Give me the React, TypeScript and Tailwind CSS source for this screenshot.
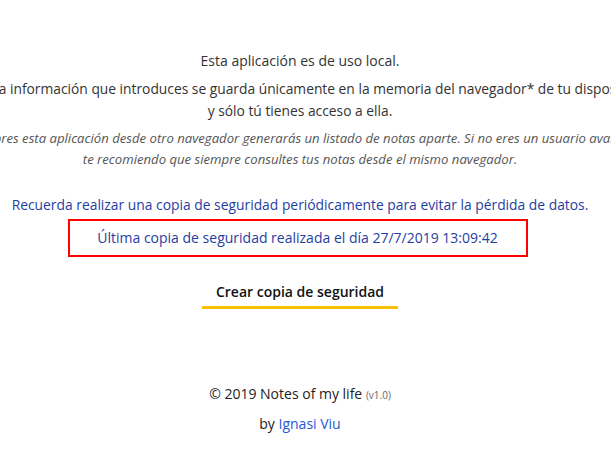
export default function App() {
  return (
    <div
      className="min-h-[459px] w-full overflow-hidden bg-white text-[#333]"
      style={{ fontFamily: '"Open Sans", sans-serif' }}
    >
      <div className="flex flex-col items-center pt-[50px] pr-[11px]">
        {/* Info */}
        <div className="flex w-[760px] shrink-0 flex-col items-center whitespace-nowrap text-center text-[14px] leading-[22px]">
          <p>Esta aplicación es de uso local.</p>
          <p className="mt-[6px] text-[13.8px]">
            <span className="ml-[35px]">La información que introduces se guarda únicamente en la memoria del navegador* de tu dispositivo</span>
            <br />
            y sólo tú tienes acceso a ella.
          </p>
          <p className="mt-[6px] text-[13.15px] italic leading-[21px] text-[#555]">
            <span className="ml-[15px]">*Si abres esta aplicación desde otro navegador generarás un listado de notas aparte. Si no eres un usuario avanzado,</span>
            <br />
            te recomiendo que siempre consultes tus notas desde el mismo navegador.
          </p>
        </div>

        {/* Backup */}
        <p className="mt-[25px] text-[13.85px] text-[#1f3ea3]">
          Recuerda realizar una copia de seguridad periódicamente para evitar la pérdida de datos.
        </p>
        <div className="mt-[3px] mr-[5px] flex h-[38px] w-[460px] items-center justify-center border-2 border-[#f00] text-[14px] text-[#1f3ea3]">
          Última copia de seguridad realizada el día 27/7/2019 13:09:42
        </div>

        <button className="mt-[24px] border-b-[3px] border-[#f7c100] px-[14px] pb-[4px] text-[14px] font-semibold text-[#111]">
          Crear copia de seguridad
        </button>

        {/* Footer */}
        <div className="mt-[74px] flex flex-col items-center text-[14px] text-[#222]">
          <p>
            © 2019 Notes of my life <span className="text-[10px] text-[#666]">(v1.0)</span>
          </p>
          <p className="mt-[9px]">
            by <a className="text-[#2657d6]">Ignasi Viu</a>
          </p>
        </div>
      </div>
    </div>
  )
}
